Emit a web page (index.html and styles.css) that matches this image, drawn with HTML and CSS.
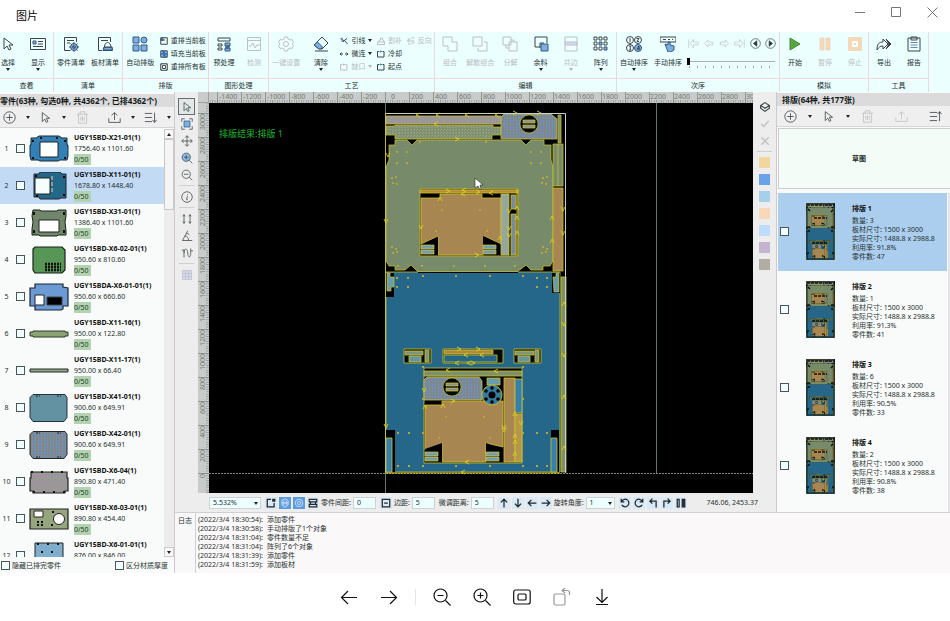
FILE: index.html
```html
<!DOCTYPE html>
<html lang="zh-CN">
<head>
<meta charset="utf-8">
<title>图片</title>
<link rel="stylesheet" href="styles.css">
</head>
<body>
<svg class="defs" aria-hidden="true">
  <defs>
    <symbol id="cursor" viewBox="0 0 16 16"><path d="M4 2v11l3-3 2 4 2-1-2-4h4z"/></symbol>
    <symbol id="card" viewBox="0 0 16 16"><path d="M.5 2.500h15v11H.5z"/><path class="b" d="M3 5h3v3H3z"/><path d="M8 5.500h5M8 8h5M3 10.500h10"/></symbol>
    <symbol id="listgear" viewBox="0 0 16 16"><path d="M7 14.500H1.500v-13h12V6M4 4.500h7M4 7h3"/><circle class="b" cx="11" cy="11" r="3.500"/><circle cx="11" cy="11" r="1.300"/><path d="M11 6v1.500M11 14.500V16M6 11h1.500M14.500 11H16M7.500 7.500l1 1M13.500 13.500l1 1M14.500 7.500l-1 1M8.500 13.500l-1 1"/></symbol>
    <symbol id="listplate" viewBox="0 0 16 16"><path d="M5 14.500H1.500v-13h12V6M4 4.500h7M6 14.500h9.500L15 11H7zM7.500 11c0-6 6-6 6.500 0"/><path class="b" d="M7 11.500h8v2.500H6.500z"/></symbol>
    <symbol id="tiles" viewBox="0 0 16 16"><g class="b"><path d="M1 1h6v6H1zM1 9h6v6H1zM9 9h6v6H9z"/><circle cx="12" cy="4" r="3"/></g></symbol>
    <symbol id="renest" viewBox="0 0 16 16"><path d="M1.500 1.500h13v13h-13zM5 1v5h5M5 6H1"/><path class="b" d="M3 3h3v4H3z"/></symbol>
    <symbol id="fill" viewBox="0 0 16 16"><path class="b" d="M1.500 1.500h13v13h-13zM1 8h14M8 1v14M5 2l4 5M8 10l5 4"/></symbol>
    <symbol id="nestall" viewBox="0 0 16 16"><path d="M1.500 1.500h13v13h-13z"/><circle cx="8" cy="8" r="3.500"/><path d="M3 3l2 2M13 13l-2-2M13 3l-2 2M3 13l2-2"/></symbol>
    <symbol id="pre" viewBox="0 0 16 16"><path d="M2 2h12v3H2zM2 8h4v2H2zM2 12h4v2H2z"/><path class="b" d="M9 7h5v3H9zM10 10h3v2h-3zM9 12h5v3H9z"/></symbol>
    <symbol id="detect" viewBox="0 0 16 16"><path d="M1.500 1.500h13v13h-13zM1 4.500h14M3 10h2l2-3 2 5 2-3h3"/></symbol>
    <symbol id="gear" viewBox="0 0 16 16"><circle cx="8" cy="8" r="2.500"/><path d="M6.500 1h3l.5 2 2 1 2-.5 1.500 3L14 8l1.500 1.500-1.500 3-2-.5-2 1-.5 2h-3L6 13l-2-1-2 .5-1.500-3L2 8 .5 6.500 2 3.500 4 4l2-1z"/></symbol>
    <symbol id="eraser" viewBox="0 0 16 16"><path d="M9 1l6 6-6 6H6L1 9zM2 15h13"/><path class="b" d="M4.500 6L9.500 11 8 13H6L1 9z"/></symbol>
    <symbol id="lead" viewBox="0 0 16 16"><path d="M1 3l5 3 1 4M14 3L6 9M9 7l6 7"/><path class="l" d="M4 1v9"/></symbol>
    <symbol id="micro" viewBox="0 0 16 16"><path d="M0 8h6M10 8h6M3 5L0 8l3 3M13 5l3 3-3 3"/></symbol>
    <symbol id="box" viewBox="0 0 16 16"><path d="M4 3H1v11h13V3h-3"/><path class="l" d="M5 3h5M7 1v4"/></symbol>
    <symbol id="stamp" viewBox="0 0 16 16"><path d="M1 10h14v5H1zM4 10V7l3-1V2h4v4l3 1v3"/></symbol>
    <symbol id="rev" viewBox="0 0 16 16"><path d="M1 4h6M9 2h6M1 8h14M4 5L1 8l3 3M9 12h6M2 14h5"/></symbol>
    <symbol id="union" viewBox="0 0 16 16"><path d="M1 1h9v5h5v9H6v-5H1z"/></symbol>
    <symbol id="ungroup" viewBox="0 0 16 16"><path d="M1 1h9v9H1zM12 6h3v9H6v-3"/></symbol>
    <symbol id="split" viewBox="0 0 16 16"><path d="M1 1h8v8H1zM7 6h8v9H7zM9 4h3v2M4 9v3h3"/></symbol>
    <symbol id="remnant" viewBox="0 0 16 16"><path d="M7 11H2V1h12v6"/><path d="M7 12V7h4"/><path class="b" d="M8 8h7v7H8z"/></symbol>
    <symbol id="edge" viewBox="0 0 16 16"><path d="M2 1h12v14H2z"/><path class="b" d="M2 6h12v3H2z"/></symbol>
    <symbol id="array" viewBox="0 0 16 16"><path d="M1 1h3v3H1zM6 1h3v3H6zM11 1h3v3h-3zM1 6h3v3H1zM11 6h3v3h-3zM1 11h3v3H1zM6 11h3v3H6z"/><path class="b" d="M6 6h3v3H6zM11 11h3v3h-3z"/></symbol>
    <symbol id="order" viewBox="0 0 16 16"><circle cx="4" cy="4" r="3.500"/><circle cx="12" cy="4" r="3.500"/><circle cx="4" cy="12" r="3.500"/><circle class="b" cx="12" cy="12" r="3.500"/><path d="M4 2v4M10.500 2.500h2.500l-2 3h2M3 10h2l-1 2 1 2H3M13 10v4M13 10l-2 3h3"/></symbol>
    <symbol id="manual" viewBox="0 0 16 16"><path d="M0 1h16v5H0zM3 3.500h3M8 3.500h2M12 3.500h1"/><path class="b" d="M5 8l3 1V6h2v3l4 1v4l-3 2H8z"/></symbol>
    <symbol id="first" viewBox="0 0 16 16"><path d="M1 2v12M3 8l5-6v4h7v4H8v4z"/></symbol>
    <symbol id="prev" viewBox="0 0 16 16"><path d="M2 8l5-5v3h7v4H7v3z"/></symbol>
    <symbol id="next" viewBox="0 0 16 16"><path d="M14 8L9 3v3H2v4h7v3z"/></symbol>
    <symbol id="last" viewBox="0 0 16 16"><path d="M15 2v12M13 8L8 2v4H1v4h7v4z"/></symbol>
    <symbol id="cprev" viewBox="0 0 16 16"><circle cx="8" cy="8" r="7"/><path class="k" d="M10 4v8L5 8z"/></symbol>
    <symbol id="cnext" viewBox="0 0 16 16"><circle cx="8" cy="8" r="7"/><path class="k" d="M6 4v8l5-4z"/></symbol>
    <symbol id="play" viewBox="0 0 16 16"><path d="M3 2l10 6-10 6z" fill="#58a63c" stroke="#3f8b35"/></symbol>
    <symbol id="pause" viewBox="0 0 16 16"><path d="M3 2h4v12H3zM9 2h4v12H9z" fill="#f3d9b8" stroke="#eed5bb"/></symbol>
    <symbol id="stop" viewBox="0 0 16 16"><path d="M3 3h10v10H3z" fill="#fff" stroke="#f3d9b8" stroke-width="4"/><path d="M7 7h2v2H7z" fill="#f3d9b8" stroke="none"/></symbol>
    <symbol id="export" viewBox="0 0 16 16"><path d="M1 14c0-6 2-8 6-8V3l5 5-5 5v-3c-3 0-4 1-6 4z"/><path class="k" d="M10 3l5 5-5 5 3-5z"/></symbol>
    <symbol id="report" viewBox="0 0 16 16"><path d="M2 2h12v13H2zM5 1h6v3H5z"/><path d="M4.500 6.500h7M4.500 9h7M4.500 11.500h7" stroke="#68a"/></symbol>
    <symbol id="plus" viewBox="0 0 16 16"><circle cx="8" cy="8" r="7"/><path d="M4 8h8M8 4v8"/></symbol>
    <symbol id="trash" viewBox="0 0 16 16"><path d="M1 4h14M3 4v11h10V4M5 4V1h6v3M6 7v5M8 7v5M10 7v5"/></symbol>
    <symbol id="share" viewBox="0 0 16 16"><path d="M1 9v5h14V9M8 11V2M4.500 5.500L8 2l3.500 3.500"/></symbol>
    <symbol id="sortd" viewBox="0 0 16 16"><path d="M1 3h9M1 8h9M1 13h9M13 2v12M10.500 11l2.500 3 2.500-3"/></symbol>
    <symbol id="sortu" viewBox="0 0 16 16"><path d="M1 3h9M1 8h9M1 13h9M13 14V2M10.500 5L13 2l2.500 3"/></symbol>
    <symbol id="fit" viewBox="0 0 16 16"><path d="M1 5V1h4M11 1h4v4M15 11v4h-4M5 15H1v-4"/><path class="b" d="M4 4h8v8H4z"/></symbol>
    <symbol id="move" viewBox="0 0 16 16"><path d="M8 1v14M1 8h14M5.500 3.500L8 1l2.500 2.500M5.500 12.500L8 15l2.500-2.500M3.500 5.500L1 8l2.500 2.500M12.500 5.500L15 8l-2.500 2.500"/></symbol>
    <symbol id="zin" viewBox="0 0 16 16"><circle cx="7" cy="7" r="5.500"/><path d="M11 11l4 4M4 7h6M7 4v6"/></symbol>
    <symbol id="zout" viewBox="0 0 16 16"><circle cx="7" cy="7" r="5.500"/><path d="M11 11l4 4M4 7h6"/></symbol>
    <symbol id="info" viewBox="0 0 16 16"><circle cx="8" cy="8" r="7"/><path d="M9 4l-.3 1M8.500 6.500l-1 5h1.500"/></symbol>
    <symbol id="measure" viewBox="0 0 16 16"><path d="M4 3v10M12 3v10M2.500 4.500L4 2l1.500 2.500M2.500 11.500L4 14l1.500-2.500M10.500 4.500L12 2l1.500 2.500M10.500 11.500L12 14l1.500-2.500"/></symbol>
    <symbol id="angle" viewBox="0 0 16 16"><path d="M9 1L2 14h13M5 8c4 0 5 3 5 6M7 4l4 2"/></symbol>
    <symbol id="curve" viewBox="0 0 16 16"><path d="M1 4h3v10M4 8c0-8 5-6 5 0s4 8 4-1V2M13 5h3"/></symbol>
    <symbol id="grid" viewBox="0 0 16 16"><path class="b" d="M2 2h12v12H2zM2 6h12M2 10h12M6 2v12M10 2v12"/></symbol>
    <symbol id="layers" viewBox="0 0 16 16"><path d="M8 1l7 4.500-7 4.500-7-4.500zM1 5.500V10l7 5 7-5V5.500" stroke-width="1.800"/></symbol>
    <symbol id="check" viewBox="0 0 16 16"><path d="M2 8l4 4 8-9" stroke-width="2"/></symbol>
    <symbol id="cross" viewBox="0 0 16 16"><path d="M2 2l12 12M14 2L2 14" stroke-width="2"/></symbol>
    <symbol id="corner" viewBox="0 0 16 16"><path class="k" d="M11 2h3v3h-3z"/><path d="M8 2H2v12h11V8"/></symbol>
    <symbol id="snap" viewBox="0 0 16 16"><path d="M3 4l5-3 5 3v7l-5 4-5-4zM3 8h10M6 4v8M10 4v8"/></symbol>
    <symbol id="ring" viewBox="0 0 16 16"><circle cx="8" cy="8" r="6"/><circle cx="8" cy="8" r="2.500"/></symbol>
    <symbol id="rows" viewBox="0 0 16 16"><path d="M2 2h12v4H2zM2 10h12v4H2zM4 6v4M12 6v4"/></symbol>
    <symbol id="margin" viewBox="0 0 16 16"><path d="M2 2h12v12H2zM5 8h6"/></symbol>
    <symbol id="up" viewBox="0 0 16 16"><path d="M8 15V2M3 7l5-5 5 5"/></symbol>
    <symbol id="down" viewBox="0 0 16 16"><path d="M8 1v13M3 9l5 5 5-5"/></symbol>
    <symbol id="left" viewBox="0 0 16 16"><path d="M15 8H2M7 3L2 8l5 5"/></symbol>
    <symbol id="right" viewBox="0 0 16 16"><path d="M1 8h13M9 3l5 5-5 5"/></symbol>
    <symbol id="ccw" viewBox="0 0 16 16"><path d="M3 5a6 6 0 1 1 0 6M2 1v5h5"/></symbol>
    <symbol id="cw" viewBox="0 0 16 16"><path d="M13 5a6 6 0 1 0 0 6M14 1v5H9"/></symbol>
    <symbol id="tl" viewBox="0 0 16 16"><path d="M13 15V5H3M7 1L3 5l4 4"/></symbol>
    <symbol id="tr" viewBox="0 0 16 16"><path d="M3 15V5h10M9 1l4 4-4 4"/></symbol>
    <symbol id="mirror" viewBox="0 0 16 16"><path d="M2 2h3v12H2z"/><path class="k" d="M10 2h4v12h-4z"/></symbol>

    <pattern id="mauve" width="3" height="3" patternUnits="userSpaceOnUse"><path d="M0 0h3v3H0z" fill="#969a93"/><path d="M0 0h1v1H0z" fill="#c07fc9"/></pattern>
    <pattern id="hatch" width="3" height="3" patternUnits="userSpaceOnUse"><path d="M0 0h3v3H0z" fill="#7f9073"/><path d="M0 0h1v1H0zM2 1h1v1H2z" fill="#9ba87d"/></pattern>
    <pattern id="steel" width="3" height="3" patternUnits="userSpaceOnUse"><path d="M0 0h3v3H0z" fill="#81888b"/><path d="M0 0h1v2H0z" fill="#6594d5"/></pattern>
    <pattern id="sea" width="4" height="4" patternUnits="userSpaceOnUse"><path d="M0 0h4v4H0z" fill="#236789"/><path d="M1 0h1v1H1zM3 2h1v1H3z" fill="#355f8b"/></pattern>

    <g id="slug"><path d="M0 0h13v4H0zM0 5h13v4H0z" fill="#7fa0a3" stroke="#d3c92c" stroke-width=".7"/><path d="M2 2h9M2 7h9" stroke="#6b8fd0" stroke-dasharray="2 1"/></g>
    <g id="hub"><circle cx="0" cy="0" r="9" fill="#050805" stroke="#d3c92c" stroke-width=".6"/><path d="M-6-4H6v3H-6zM-6 1H6v3H-6z" fill="#879493" stroke="#d3c92c" stroke-width=".7"/></g>
    <symbol id="nest" viewBox="385 113 182 360">
      <path d="M385 113h181v360H385z" fill="#000" stroke="none"/>
      <g stroke="#c5bd2b" stroke-width=".8">
        <path d="M386 116h115v8H386z" fill="url(#mauve)"/>
        <path d="M386 126h9v-1h98v2h8v8h-9v4H395v-4h-9z" fill="url(#hatch)"/>
        <path d="M504 114h47l6 5v20h-56v-22z" fill="url(#steel)"/>
        <path d="M558 115h3v28h-3z" fill="#7e906f"/>
        <path d="M395 140h12l5 5 5-5h104l5 5 5-5h13v5h7v15l2 7v94l-3 5h-7v4h-12l-5-5-9 7H418l-7-7-6 5H395v-4h-6l-3-5v-94l3-7v-15h6z" fill="#778b6b"/>
        <path d="M553 144h10v42h-10zM558 144v42" fill="#778b6b"/>
        <path d="M553 188h10v83h-10z" fill="#a88652"/>
        <path d="M386 272h174v200H386z" fill="url(#sea)"/>
      </g>
      <path d="M385 273h9v24h-9zM552 273h8v20h-8zM386 430h9v42h-9zM551 430h8v42h-8zM418 272h100v1H418z" fill="#000" stroke="none"/>
      <g fill="#6a9caa" stroke="#cfc72a" stroke-width=".7"><path d="M387 273h3v4h4v10h-3v4h-4zM553 277h3v-4h3v19h-5z"/></g>
      <path d="M386 438h6v34h-6zM551 438h6v34h-6z" fill="#3580ae" stroke="#cfc72a" stroke-width=".8"/>
      <path d="M561 277h5v195h-5z" fill="#7c906a" stroke="#cfc72a" stroke-width=".8"/>
      <path d="M420 189h98v67h-98z" fill="#000" stroke="#b0a42d"/>
      <g stroke="#cfc32a" stroke-width=".8">
        <path d="M420 190h98v3h-98z" fill="#b58b38"/>
        <path d="M421 198h19v-4h42v4h19v46l-17-8v19h-46v-19l-17 8z" fill="#a88652"/>
        <path d="M501 194h8v61h-8z" fill="#93a79d"/>
        <path d="M511 195h5v14h-5zM511 214h5v41h-5z" fill="url(#steel)"/>
        <path d="M404 349h27v14h-27zM443 349h60v14h-60zM514 349h27v14h-27z" fill="#030a08"/>
        <path d="M405 351h18v4h-18zM425 350h4v12h-4zM515 351h19v4h-19zM535 350h4v12h-4z" fill="#7f947c"/>
        <path d="M409 356h12v6h-12zM518 356h12v6h-12z" fill="#6595a0"/>
        <path d="M444 350h49v4h-49z" fill="#ae8b42"/>
        <path d="M444 355h53v7h-53z" fill="#236789"/>
        <path d="M424 368h98v95h-98z" fill="#000"/>
        <path d="M424 371h98v5h-98z" fill="#7c906a"/>
        <path d="M427 377h52l3 4v19h-58v-20z" fill="url(#steel)"/>
        <path d="M425 405h17v-4h61v46l-17-4v19h-44v-19l-17 7z" fill="#a88652"/>
        <path d="M504 378h11v84h-11z" fill="#a88652"/>
        <path d="M515 379h7v34h-7z" fill="#3580ae"/>
        <path d="M515 414h7v48h-7z" fill="#b6964b"/>
        <path d="M487 378h13v7h-13z" fill="#6a9caa"/>
        <circle cx="492" cy="395" r="10" fill="#347da0"/>
      </g>
      <path d="M421 246l17-9v18h-17zM483 236l17 8v11h-17zM425 449l17-6v19h-17zM486 443l17 8v11h-17z" fill="#000" stroke="none"/>
      <use href="#slug" x="421" y="245"/><use href="#slug" x="483" y="245"/><use href="#slug" x="425" y="452"/><use href="#slug" x="486" y="452"/>
      <use href="#hub" x="529" y="124"/><use href="#hub" x="452" y="387"/>
      <g fill="#000" stroke="none"><circle cx="492" cy="395" r="3.500"/><circle cx="492" cy="388" r="1.800"/><circle cx="492" cy="402" r="1.800"/><circle cx="498" cy="391" r="1.800"/><circle cx="498" cy="399" r="1.800"/><circle cx="486" cy="391" r="1.800"/><circle cx="486" cy="399" r="1.800"/></g>
    </symbol>
    <symbol id="thumb" viewBox="0 0 29 57">
      <path d="M0 0h29v57H0z" fill="#10231f"/>
      <use href="#nest" width="29" height="57"/>
      <path d="M1 2h17M19 2h9M2 6l2 2M27 7l-2 2M1 24h3M25 24h3M2 28h2M25 28h2M1 50h2M26 50h2M8 15h13M6 40h15" stroke="#111" stroke-width="1.500" stroke-dasharray="3 1"/>
      <path d="M1 1v55h27V1z" fill="none" stroke="#18241e"/>
    </symbol>
    <pattern id="minorh" x="385" width="2.400" height="11" patternUnits="userSpaceOnUse"><path d="M0 8h.8v3H0z" fill="#8f9a95"/></pattern>
    <pattern id="majorh" x="385" width="24" height="11" patternUnits="userSpaceOnUse"><path d="M0 0h.8v11H0z" fill="#7d8a82"/></pattern>
    <pattern id="minorv" y="473" width="11" height="2.400" patternUnits="userSpaceOnUse"><path d="M8 0h3v.8H8z" fill="#8f9a95"/></pattern>
    <pattern id="majorv" y="473" width="11" height="24" patternUnits="userSpaceOnUse"><path d="M0 0h11v.8H0z" fill="#7d8a82"/></pattern>
  </defs>
</svg>

<header class="titlebar">
  <h1>图片</h1>
  <div class="winbtns">
    <button aria-label="最小化"><svg class="i11"><path d="M0 5.500h10"/></svg></button>
    <button aria-label="最大化"><svg class="i11"><path d="M.5.500h9v9h-9z"/></svg></button>
    <button aria-label="关闭"><svg class="i11"><path d="M.5.500l10 10M10.500.500l-10 10"/></svg></button>
  </div>
</header>

<nav class="ribbon">
  <section><div class="body"><button class="big"><svg><use href="#cursor"/></svg>选择<i class="caret"></i></button><button class="big"><svg><use href="#card"/></svg>显示<i class="caret"></i></button></div><h2>查看</h2></section>
  <section><div class="body"><button class="big"><svg><use href="#listgear"/></svg>零件清单</button><button class="big"><svg><use href="#listplate"/></svg>板材清单</button></div><h2>清单</h2></section>
  <section><div class="body"><button class="big"><svg><use href="#tiles"/></svg>自动排版</button><div class="stack"><button><svg><use href="#renest"/></svg>重排当前板</button><button><svg><use href="#fill"/></svg>填充当前板</button><button><svg><use href="#nestall"/></svg>重排所有板</button></div></div><h2>排版</h2></section>
  <section><div class="body"><button class="big"><svg><use href="#pre"/></svg>预处理</button><button class="big off"><svg><use href="#detect"/></svg>检测</button></div><h2>图形处理</h2></section>
  <section><div class="body"><button class="big off"><svg><use href="#gear"/></svg>一键设置</button><button class="big"><svg><use href="#eraser"/></svg>清除<i class="caret"></i></button>
    <div class="stack"><button><svg><use href="#lead"/></svg>引线<i class="caret"></i></button><button><svg><use href="#micro"/></svg>微连<i class="caret"></i></button><button class="off"><svg><use href="#box"/></svg>缺口<i class="caret"></i></button></div>
    <div class="stack"><button class="off"><svg><use href="#stamp"/></svg>割补</button><button><svg><use href="#box"/></svg>冷却</button><button><svg><use href="#box"/></svg>起点</button></div>
    <div class="stack"><button class="off"><svg><use href="#rev"/></svg>反向</button></div></div><h2>工艺</h2></section>
  <section><div class="body"><button class="big off"><svg><use href="#union"/></svg>组合</button><button class="big off"><svg><use href="#ungroup"/></svg>解散组合</button><button class="big off"><svg><use href="#split"/></svg>分解</button><button class="big"><svg><use href="#remnant"/></svg>余料<i class="caret"></i></button><button class="big off"><svg><use href="#edge"/></svg>共边<i class="caret"></i></button><button class="big"><svg><use href="#array"/></svg>阵列<i class="caret"></i></button></div><h2>编辑</h2></section>
  <section><div class="body"><button class="big"><svg><use href="#order"/></svg>自动排序<i class="caret"></i></button><button class="big"><svg><use href="#manual"/></svg>手动排序</button>
    <div class="playback"><div class="steps"><button class="off" aria-label="第一个"><svg><use href="#first"/></svg></button><button class="off" aria-label="上一个"><svg><use href="#prev"/></svg></button><button class="off" aria-label="下一个"><svg><use href="#next"/></svg></button><button class="off" aria-label="最后"><svg><use href="#last"/></svg></button><button aria-label="后退"><svg><use href="#cprev"/></svg></button><button aria-label="前进"><svg><use href="#cnext"/></svg></button></div><input type="range" aria-label="次序" min="0" max="11" value="0"><div class="ticks"></div></div></div><h2>次序</h2></section>
  <section><div class="body"><button class="big"><svg><use href="#play"/></svg>开始</button><button class="big off"><svg><use href="#pause"/></svg>暂停</button><button class="big off"><svg><use href="#stop"/></svg>停止</button></div><h2>模拟</h2></section>
  <section><div class="body"><button class="big"><svg><use href="#export"/></svg>导出</button><button class="big"><svg><use href="#report"/></svg>报告</button></div><h2>工具</h2></section>
</nav>

<main>
  <aside class="parts">
    <h2 class="head">零件(63种, 勾选0种, 共4362个, 已排4362个)</h2>
    <div class="bar"><button aria-label="添加"><svg><use href="#plus"/></svg></button><i class="caret"></i><button aria-label="选择"><svg><use href="#cursor"/></svg></button><i class="caret"></i><button class="off" aria-label="删除"><svg><use href="#trash"/></svg></button><span></span><button aria-label="导出"><svg><use href="#share"/></svg></button><i class="caret"></i><button aria-label="排序"><svg><use href="#sortd"/></svg></button><i class="caret"></i></div>
    <div class="listwrap">
      <ol class="partlist">
        <li><label for="p1">1</label><input type="checkbox" id="p1"><svg viewBox="0 0 40 28"><path d="M2 3h5l3-2h20l3 2h5v7h1v11l-1 4h-7l-2 1H11l-2-1H2l-1-4V10h1z" fill="#3181b6" stroke="#1c2a33"/><path d="M11 7h18v15H11z" fill="#fff" stroke="#222"/><path d="M4 5v2M4 22v2M36 5v2M36 22v2M11 3h2M27 3h2" stroke="#111" stroke-width="2"/></svg><div><b>UGY15BD-X21-01(1)</b><span>1756.40 x 1101.60</span><em>0/50</em></div></li>
        <li class="picked"><label for="p2">2</label><input type="checkbox" id="p2"><svg viewBox="0 0 40 28"><path d="M5 2h5l1-2h20l2 2h4v24h-5l-2 1H11l-1-2H5z" fill="#236789" stroke="#1c2a33"/><path d="M6 6h15v16H6z" fill="#f4fffd" stroke="#222"/><path d="M23 4v18" stroke="#8d9d9e" stroke-width="2" stroke-dasharray="4 2"/><path d="M7 3v2M35 4v2M35 22v2M8 23v2" stroke="#000" stroke-width="2"/></svg><div><b>UGY15BD-X11-01(1)</b><span>1678.80 x 1448.40</span><em>0/50</em></div></li>
        <li><label for="p3">3</label><input type="checkbox" id="p3"><svg viewBox="0 0 40 28"><path d="M4 1h7l1 1h16l1-1h8v6l-1 6 1 9v4h-8l-1 1H11l-1-1H3v-6l1-7-1-6z" fill="#71866a" stroke="#1b221a"/><path d="M10 11h20v12H10z" fill="#fff" stroke="#222"/><path d="M5 3v3M35 3v3M5 21v3M35 21v3" stroke="#111" stroke-width="2"/></svg><div><b>UGY15BD-X31-01(1)</b><span>1386.40 x 1101.60</span><em>0/50</em></div></li>
        <li><label for="p4">4</label><input type="checkbox" id="p4"><svg viewBox="0 0 40 28"><path d="M6 1h27l3 3v20l-3 3H6l-2-3V3z" fill="#579657" stroke="#1b221a" stroke-width="1.200"/><path d="M16 21h16M16 18h16M16 24h16" stroke="#111" stroke-width="2.500" stroke-dasharray="2 1"/></svg><div><b>UGY15BD-X6-02-01(1)</b><span>950.60 x 810.60</span><em>0/50</em></div></li>
        <li><label for="p5">5</label><input type="checkbox" id="p5"><svg viewBox="0 0 40 28"><path d="M6 1h28v3l5 1v18h-5v3l-2 1H6v-4H1V5h5z" fill="#6b9ad5" stroke="#1b2633" stroke-width="1.200"/><path d="M6 12h9v10H6z" fill="#fff" stroke="#222"/><path d="M18 14h15v8H18z" fill="#000"/></svg><div><b>UGY15BDA-X6-01-01(1)</b><span>950.60 x 660.60</span><em>0/50</em></div></li>
        <li><label for="p6">6</label><input type="checkbox" id="p6"><svg viewBox="0 0 40 28"><path d="M1 12h3v-1h32v1h3v4h-3v1H4v-1H1z" fill="#8ba277" stroke="#303a2c"/></svg><div><b>UGY15BD-X11-16(1)</b><span>950.00 x 122.80</span><em>0/50</em></div></li>
        <li><label for="p7">7</label><input type="checkbox" id="p7"><svg viewBox="0 0 40 28"><path d="M1 12h38v3H1z" fill="#96a491" stroke="#222b22"/></svg><div><b>UGY15BD-X11-17(1)</b><span>950.00 x 66.40</span><em>0/50</em></div></li>
        <li><label for="p8">8</label><input type="checkbox" id="p8"><svg viewBox="0 0 40 28"><path d="M4 .5h32l2 3v20l-3 4H4l-3-4v-20z" fill="#6392a3" stroke="#24313a"/><path d="M7 2h4M28 2h4" stroke="#222" stroke-dasharray="2 1"/></svg><div><b>UGY15BD-X41-01(1)</b><span>900.60 x 649.91</span><em>0/50</em></div></li>
        <li><label for="p9">9</label><input type="checkbox" id="p9"><svg viewBox="0 0 40 28"><path d="M4 .5h32l2 3v20l-3 4H4l-3-4v-20z" fill="url(#steel)" stroke="#24272a"/><path d="M7 2h4M28 2h4M7 26h4M28 26h4" stroke="#222" stroke-dasharray="2 1"/></svg><div><b>UGY15BD-X42-01(1)</b><span>900.60 x 649.91</span><em>0/50</em></div></li>
        <li><label for="p10">10</label><input type="checkbox" id="p10"><svg viewBox="0 0 40 28"><path d="M2 4h36v6h1v13h-3v2H4v-2H1V10h1z" fill="url(#mauve)" stroke="#222" stroke-width="1.200"/><path d="M2 4h36M4 24h32" stroke="#111" stroke-width="2" stroke-dasharray="2 8"/></svg><div><b>UGY15BD-X6-04(1)</b><span>890.80 x 471.40</span><em>0/50</em></div></li>
        <li><label for="p11">11</label><input type="checkbox" id="p11"><svg viewBox="0 0 40 28"><path d="M1 4h38v20H1z" fill="#96a57d" stroke="#222" stroke-width="1.200"/><path d="M5 6h9v6H5z" fill="#fff" stroke="#222"/><circle cx="30" cy="14" r="5.500" fill="#fff" stroke="#222"/><path d="M8 17h6M8 20h6M23 7h2M22 20h2" stroke="#111" stroke-width="2" stroke-dasharray="2 2"/></svg><div><b>UGY15BD-X6-03-01(1)</b><span>890.80 x 454.40</span><em>0/50</em></div></li>
        <li><label for="p12">12</label><input type="checkbox" id="p12"><svg viewBox="0 0 40 28"><path d="M6 1h28v26H6z" fill="#7faecd" stroke="#222"/><path d="M8 2h26M12 10h18" stroke="#111" stroke-width="2" stroke-dasharray="2 8"/></svg><div><b>UGY15BD-X6-01-01(1)</b><span>876.00 x 846.00</span><em>0/50</em></div></li>
      </ol>
      <div class="scroll"><button aria-label="向上"><i class="caret flip"></i></button><div class="grip"></div><button aria-label="向下"><i class="caret"></i></button></div>
    </div>
    <div class="filters"><label><input type="checkbox">隐藏已排完零件</label><label><input type="checkbox">区分材质厚度</label></div>
  </aside>

  <div class="work">
    <div class="upper">
      <div class="center">
        <div class="stage">
          <div class="tools">
            <button class="on" aria-label="选择"><svg><use href="#cursor"/></svg></button><button aria-label="适合"><svg><use href="#fit"/></svg></button><button aria-label="平移"><svg><use href="#move"/></svg></button><button class="zi" aria-label="放大"><svg><use href="#zin"/></svg></button><button aria-label="缩小"><svg><use href="#zout"/></svg></button><hr>
            <button aria-label="信息"><svg><use href="#info"/></svg></button><hr>
            <button aria-label="测量"><svg><use href="#measure"/></svg></button><button aria-label="角度"><svg><use href="#angle"/></svg></button><button aria-label="曲线"><svg><use href="#curve"/></svg></button><hr>
            <button class="off" aria-label="网格"><svg><use href="#grid"/></svg></button>
          </div>
          <div class="canvas">
            <div class="cross"></div>
            <svg class="rh" viewBox="209 0 544 11" preserveAspectRatio="xMinYMin slice">
              <g stroke="none"><path d="M209 0h1200v11H209z" fill="#c9cbca"/><path d="M209 0h1200v11H209z" fill="url(#minorh)"/><path d="M209 0h1200v11H209z" fill="url(#majorh)"/></g>
              <g class="num"><text x="219" y="7">-1400</text><text x="243" y="7">-1200</text><text x="267" y="7">-1000</text><text x="291" y="7">-800</text><text x="315" y="7">-600</text><text x="339" y="7">-400</text><text x="363" y="7">-200</text><text x="391" y="7">0</text><text x="411" y="7">200</text><text x="435" y="7">400</text><text x="459" y="7">600</text><text x="483" y="7">800</text><text x="506" y="7">1000</text><text x="530" y="7">1200</text><text x="554" y="7">1400</text><text x="578" y="7">1600</text><text x="602" y="7">1800</text><text x="626" y="7">2000</text><text x="650" y="7">2200</text><text x="674" y="7">2400</text><text x="698" y="7">2600</text><text x="722" y="7">2800</text><text x="746" y="7">3000</text></g>
            </svg>
            <svg class="rv" viewBox="0 103 11 390" preserveAspectRatio="xMinYMin slice">
              <g stroke="none"><path d="M0 103h11v900H0z" fill="#c9cbca"/><path d="M0 103h11v900H0z" fill="url(#minorv)"/><path d="M0 103h11v900H0z" fill="url(#majorv)"/></g>
              <g class="num end"><text transform="translate(7 114) rotate(-90)">3000</text><text transform="translate(7 138) rotate(-90)">2800</text><text transform="translate(7 162) rotate(-90)">2600</text><text transform="translate(7 186) rotate(-90)">2400</text><text transform="translate(7 210) rotate(-90)">2200</text><text transform="translate(7 234) rotate(-90)">2000</text><text transform="translate(7 258) rotate(-90)">1800</text><text transform="translate(7 282) rotate(-90)">1600</text><text transform="translate(7 306) rotate(-90)">1400</text><text transform="translate(7 330) rotate(-90)">1200</text><text transform="translate(7 354) rotate(-90)">1000</text><text transform="translate(7 378) rotate(-90)">800</text><text transform="translate(7 402) rotate(-90)">600</text><text transform="translate(7 426) rotate(-90)">400</text><text transform="translate(7 450) rotate(-90)">200</text><text transform="translate(7 474) rotate(-90)">0</text></g>
            </svg>
            <svg class="plot" viewBox="209 103 544 390" preserveAspectRatio="xMinYMin slice">
              <path d="M385.500 103v390M656.500 103v370" stroke="#64776c"/>
              <path d="M209 473.500h544" stroke="#7d8a86" stroke-dasharray="2 1"/>
              <text class="result" x="219" y="137">排版结果:排版 1</text>
              <use href="#nest" x="385" y="113" width="182" height="360"/>
              <path d="M385 113.500h180.500V473" fill="none" stroke="#c9cfc4"/>
              <g fill="none" stroke="#dbd01f" stroke-width=".9">
                <path d="M465 115l4-2m-4 2l4 2M495 115l4-2m-4 2l4 2M436 115l4-2m-4 2l4 2M416 115l4-2m-4 2l4 2M434 124l4-2m-4 2l4 2M517 113l-4-2m4 2l-4 2M541 113l-4-2m4 2l-4 2M459 139l-4-2m4 2l-4 2M450 191l-4-2m4 2l-4 2M480 192l-4-2m4 2l-4 2M462 190l4-2m-4 2l4 2M489 193l4-2m-4 2l4 2M461 194l4-2m-4 2l4 2M479 255l-4-2m4 2l-4 2M461 349l-4-2m4 2l-4 2M480 349l-4-2m4 2l-4 2M464 355l4-2m-4 2l4 2M480 355l4-2m-4 2l4 2M446 370l4-2m-4 2l4 2M494 371l4-2m-4 2l4 2M455 363l4-2m-4 2l4 2M465 462l4-2m-4 2l4 2M461 472l4-2m-4 2l4 2M455 401l-4-2m4 2l-4 2"/>
                <path d="M386 223l-2-4m2 4l2-4M388 157l-2-4m2 4l2-4M421 229l-2-4m2 4l2-4M509 213l-2-4m2 4l2-4M509 230l-2-4m2 4l2-4M509 237l-2-4m2 4l2-4M563 211l-2-4m2 4l2-4M563 235l-2-4m2 4l2-4M424 392l-2-4m2 4l2-4M504 429l-2-4m2 4l2-4M504 432l-2-4m2 4l2-4M521 425l-2-4m2 4l2-4M386 428l-2-4m2 4l2-4M564 326l-2-4m2 4l2-4M564 357l-2-4m2 4l2-4"/>
                <path d="M440 197l-2 4m2-4l2 4M552 216l-2 4m2-4l2 4M552 239l-2 4m2-4l2 4M517 206l-2 4m2-4l2 4M517 216l-2 4m2-4l2 4M517 231l-2 4m2-4l2 4M500 236l-2 4m2-4l2 4M564 302l-2 4m2-4l2 4M564 395l-2 4m2-4l2 4M564 446l-2 4m2-4l2 4M515 412l-2 4m2-4l2 4M515 434l-2 4m2-4l2 4M515 440l-2 4m2-4l2 4M515 452l-2 4m2-4l2 4M425 405l-2 4m2-4l2 4M443 404l-2 4m2-4l2 4"/>
                <path d="M385.500 113v360H560M517 189v67M467 363l4-2 4 2-4 2z"/>
              </g>
              <path d="M396 152h2m8 0h2M396 163h2m8 0h2M391 178h2m2-1h2M392 183h2m2 1h2M530 152h2m8 0h2M530 163h2m8 0h2M542 178h2m2-1h2M541 183h2m2 1h2M391 247h2m2 2h2M392 253h2m2-1h2M542 247h2m2 2h2M541 253h2m2-1h2M397 266h2M421 266h2M453 266h2M484 266h2M514 266h2M396 278h2m9 0h2M396 287h2m9 0h2M422 276h2M455 276h2M489 276h2M522 276h2M536 278h2m8 0h2M536 287h2m8 0h2M441 210h2m36 0h2M435 231h2m49 0h2M397 433h2m9 0h2M536 433h2m8 0h2M422 433h2M522 433h2M397 466h2m9 0h2M422 466h2M455 466h2M489 466h2M522 466h2M536 466h2m8 0h2M445 417h2m36 0h2M438 438h2m49 0h2M422 399h2M522 399h2M422 367h2M522 367h2M419 142h2m64 0h2" fill="none" stroke="#b5a53c" stroke-width="2"/>
              <path d="M475 178v10l3-2 2 4 1-1-1-4h3z" fill="#fff" stroke="#222" stroke-width=".6"/>
            </svg>
          </div>
          <div class="tools swatches">
            <button aria-label="图层"><svg><use href="#layers"/></svg></button><button class="off" aria-label="确定"><svg><use href="#check"/></svg></button><button class="off" aria-label="取消"><svg><use href="#cross"/></svg></button><hr>
            <button class="c1" aria-label="颜色一"></button><button class="c2" aria-label="颜色二"></button><button class="c3" aria-label="颜色三"></button><button class="c4" aria-label="颜色四"></button><button class="c5" aria-label="颜色五"></button><button class="c6" aria-label="颜色六"></button><button class="c7" aria-label="颜色七"></button>
          </div>
        </div>
        <div class="status">
          <div class="sel zoomsel"><select aria-label="缩放"><option>5.532%</option></select></div>
          <button aria-label="角点"><svg><use href="#corner"/></svg></button><button class="act" aria-label="吸附"><svg><use href="#snap"/></svg></button><button class="act" aria-label="避让"><svg><use href="#ring"/></svg></button><button aria-label="间距"><svg><use href="#rows"/></svg></button>
          <label for="gap">零件间距:</label><input id="gap" value="0">
          <button class="lead" aria-label="页边"><svg><use href="#margin"/></svg></button><label for="margin-in">边距:</label><input id="margin-in" value="5">
          <label class="lead" for="nudge">微调距离:</label><input id="nudge" value="5">
          <button class="lead" aria-label="上移"><svg><use href="#up"/></svg></button><button aria-label="下移"><svg><use href="#down"/></svg></button><button aria-label="左移"><svg><use href="#left"/></svg></button><button aria-label="右移"><svg><use href="#right"/></svg></button>
          <label for="rot">旋转角度:</label><div class="sel rotsel"><select id="rot"><option>1</option></select></div>
          <button class="lead" aria-label="逆时针"><svg><use href="#ccw"/></svg></button><button aria-label="顺时针"><svg><use href="#cw"/></svg></button><button aria-label="左转"><svg><use href="#tl"/></svg></button><button aria-label="右转"><svg><use href="#tr"/></svg></button><button aria-label="镜像"><svg><use href="#mirror"/></svg></button>
          <output>746.06, 2453.37</output>
        </div>
      </div>

      <aside class="nests">
        <h2 class="head">排版(64种, 共177张)</h2>
        <div class="bar"><button aria-label="添加"><svg><use href="#plus"/></svg></button><i class="caret"></i><button aria-label="选择"><svg><use href="#cursor"/></svg></button><i class="caret"></i><button class="off" aria-label="删除"><svg><use href="#trash"/></svg></button><span></span><button class="off" aria-label="导出"><svg><use href="#share"/></svg></button><span></span><button aria-label="排序"><svg><use href="#sortu"/></svg></button></div>
        <div class="draft">草图</div>
        <ul class="nestlist">
          <li class="picked"><input type="checkbox" aria-label="排版 1"><svg><use href="#thumb"/></svg><div><b>排版 1</b><span>数量: 3</span><span>板材尺寸: 1500 x 3000</span><span>实际尺寸: 1488.8 x 2988.8</span><span>利用率: 91.8%</span><span>零件数: 47</span></div></li>
          <li><input type="checkbox" aria-label="排版 2"><svg><use href="#thumb"/></svg><div><b>排版 2</b><span>数量: 1</span><span>板材尺寸: 1500 x 3000</span><span>实际尺寸: 1488.8 x 2988.8</span><span>利用率: 91.3%</span><span>零件数: 41</span></div></li>
          <li><input type="checkbox" aria-label="排版 3"><svg><use href="#thumb"/></svg><div><b>排版 3</b><span>数量: 6</span><span>板材尺寸: 1500 x 3000</span><span>实际尺寸: 1488.8 x 2988.8</span><span>利用率: 90.5%</span><span>零件数: 33</span></div></li>
          <li><input type="checkbox" aria-label="排版 4"><svg><use href="#thumb"/></svg><div><b>排版 4</b><span>数量: 2</span><span>板材尺寸: 1500 x 3000</span><span>实际尺寸: 1488.8 x 2988.8</span><span>利用率: 90.8%</span><span>零件数: 38</span></div></li>
        </ul>
      </aside>
    </div>
    <div class="log">
      <div class="tab">日志</div>
      <ul>
        <li><span>(2022/3/4 18:30:54):</span>添加零件</li>
        <li><span>(2022/3/4 18:30:58):</span>手动排版了1个对象</li>
        <li><span>(2022/3/4 18:31:04):</span>零件数量不足</li>
        <li><span>(2022/3/4 18:31:04):</span>阵列了6个对象</li>
        <li><span>(2022/3/4 18:31:39):</span>添加零件</li>
        <li><span>(2022/3/4 18:31:59):</span>添加板材</li>
      </ul>
    </div>
  </div>
</main>

<footer class="viewer">
  <button aria-label="上一张"><svg viewBox="0 0 18 18"><path d="M17 9.500H1.500M8 3L1.500 9.500 8 16"/></svg></button>
  <button aria-label="下一张"><svg viewBox="0 0 18 18"><path d="M1 9.500h15.500M10 3l6.500 6.500L10 16"/></svg></button>
  <i class="sep"></i>
  <button aria-label="缩小"><svg viewBox="0 0 18 18"><circle cx="7.500" cy="7.500" r="6.500"/><path d="M12.500 12.500l5 5M4.500 7.500h6"/></svg></button>
  <button aria-label="放大"><svg viewBox="0 0 18 18"><circle cx="7.500" cy="7.500" r="6.500"/><path d="M12.500 12.500l5 5M4.500 7.500h6M7.500 4.500v6"/></svg></button>
  <button aria-label="适合窗口"><svg viewBox="0 0 18 18"><rect x=".7" y="2" width="16.500" height="14" rx="2"/><rect x="5" y="6" width="8" height="6" rx="1"/></svg></button>
  <button class="off" aria-label="旋转"><svg viewBox="0 0 18 18"><rect x="1" y="6" width="11" height="11" rx="1.500"/><path d="M16.500 7V4.500a2 2 0 0 0-2-2H9M12 0L9 2.500 12 5"/></svg></button>
  <button aria-label="保存"><svg viewBox="0 0 18 18"><path d="M9 1v13M3.500 9L9 14.500 14.500 9M3 16.500h12"/></svg></button>
</footer>
</body>
</html>
```
FILE: styles.css
```css
* { box-sizing: border-box; }
body {
  margin: 0;
  height: 100vh;
  display: flex;
  flex-direction: column;
  overflow: hidden;
  background: #fff;
  color: #26302e;
  font: 7px/9px "Noto Sans", "Noto Sans CJK SC", sans-serif;
}
h1, h2, ul, ol { margin: 0; padding: 0; font-weight: normal; font-size: inherit; list-style: none; }
button, input, select { font: inherit; color: inherit; margin: 0; padding: 0; border: 0; background: none; }
button { display: flex; align-items: center; justify-content: center; }
svg { display: block; flex: none; fill: none; stroke: #3c4447; stroke-width: 1; overflow: hidden; }
svg text { stroke: none; }
pattern { stroke: none; }
.defs { position: absolute; width: 0; height: 0; }
.b { fill: var(--accent, #7ab0e6); stroke: var(--accent-line, #36597d); }
.k { fill: #26303a; }
.l { stroke: var(--accent-line, #3b88cc); }
.off { color: #b9bdbe; --accent: #d4dcf0; --accent-line: #bfbfc8; }
.off svg { stroke: #bfbfc2; }
.caret { width: 0; height: 0; border: 2px solid transparent; border-top: 3px solid #222; border-bottom: 0; }
.off .caret { border-top-color: #b5b5b5; }
.caret.flip { transform: rotate(180deg); }
input[type=checkbox] { appearance: none; flex: none; width: 9px; height: 9px; border: 1px solid #4c5556; background: #f0ffff; }

.titlebar { display: flex; justify-content: space-between; height: 32px; padding: 0 12px 0 16px; align-items: center; }
.titlebar h1 { font-size: 11px; line-height: 16px; color: #000; }
.winbtns { display: flex; gap: 25px; align-self: flex-start; padding-top: 7px; }
.i11 { width: 11px; height: 11px; stroke: #777; }

.ribbon {
  display: grid;
  grid-template-columns: 54fr 69fr 86fr 60fr 166fr 182fr 163fr 89fr 60fr 21fr;
  height: 60px;
  background: #ebffff;
  flex: none;
}
.ribbon section { display: flex; flex-direction: column; border-right: 1px solid #ead9da; min-width: 0; }
.ribbon h2 { height: 14px; line-height: 14px; border-top: 1px solid #f2d9da; text-align: center; }
.ribbon .body { flex: 1; display: flex; justify-content: space-around; min-width: 0; white-space: nowrap; }
.ribbon section:first-child .body { justify-content: flex-end; }
.big { flex: none; flex-direction: column; justify-content: flex-start; width: 30px; padding-top: 4px; }
.big svg { width: 16px; height: 16px; margin-bottom: 6px; }
.big .caret { margin-top: 1px; }
.stack { display: flex; flex-direction: column; align-items: flex-start; padding-top: 2px; }
.stack button { height: 13px; gap: 3px; }
.stack svg { width: 8px; height: 8px; stroke-width: 2; }
.playback { display: flex; flex-direction: column; width: 90px; }
.steps { display: flex; justify-content: space-between; padding: 6px 1px 0; }
.steps svg { width: 11px; height: 11px; }
.playback input { appearance: none; width: 88px; height: 9px; margin-top: 8px; background: linear-gradient(#a9afb2, #a9afb2) center / 100% 1px no-repeat; }
.playback input::-webkit-slider-thumb { appearance: none; width: 3px; height: 7px; background: #000; }
.ticks { height: 2px; margin: 0 2px; background: repeating-linear-gradient(90deg, #9aa 0 1px, transparent 1px 8px); }

main { flex: 1; display: flex; min-height: 0; background: #ededed; }
.parts { width: 175px; flex: none; display: flex; flex-direction: column; border-right: 1px solid #cfc9cf; background: #f8fbf9; padding-top: 2px; }
.head { height: 13px; line-height: 13px; font-size: 8px; font-weight: bold; background: #dbdbdb; color: #15191a; white-space: nowrap; flex: none; }
.bar { height: 21px; flex: none; display: flex; align-items: center; justify-content: space-between; padding: 0 3px; background: #efefef; border-bottom: 1px solid #d5d5d9; }
.bar svg { width: 13px; height: 13px; }
.listwrap { flex: 1; display: flex; min-height: 0; padding-top: 1px; }
.partlist { flex: 1; overflow: hidden; padding-top: 1px; }
.partlist li { display: flex; align-items: center; height: 37px; }
.partlist label { width: 13px; text-align: center; margin-right: 3px; }
.partlist svg { width: 40px; height: 28px; margin: 0 4px; }
.partlist div { line-height: 11px; white-space: nowrap; padding-left: 1px; }
.partlist b, .partlist span, .partlist em { display: block; }
.partlist b { color: #111; }
.partlist em { width: 17px; font-style: normal; background: #b3d3b0; color: #223d2a; }
.partlist .picked { background: #c3daf5; }
.scroll { width: 10px; flex: none; display: flex; flex-direction: column; background: #ececec; }
.scroll button { height: 10px; flex: none; border: 1px solid #ccc; background: #f8f8f8; }
.scroll .grip { height: 71px; border: 1px solid #c8c8c8; background: #f4f4f4; margin-bottom: auto; }
.filters { height: 16px; flex: none; display: flex; align-items: center; justify-content: space-between; padding: 0 6px 0 1px; }
.filters label { display: flex; gap: 2px; align-items: center; }

.work { flex: 1; display: flex; flex-direction: column; min-width: 0; }
.upper { flex: 1; display: flex; min-height: 0; }
.center { flex: 1; display: flex; flex-direction: column; min-width: 0; }
.stage { flex: 1; display: flex; min-height: 0; }
.tools { width: 23px; flex: none; display: flex; flex-direction: column; align-items: center; padding-top: 6px; }
.tools button { width: 17px; height: 17px; }
.tools svg { width: 12px; height: 12px; }
.tools .on { border: 1px solid #656d70; background: #e1e8e7; }
.tools .zi svg { fill: #8dbbea; }
.tools hr { width: 15px; height: 1px; margin: 2px 0; border: 0; background: #cfcfd2; }
.swatches svg { width: 10px; height: 10px; }
.swatches button[class^=c]::before { content: ""; width: 11px; height: 11px; background: var(--c); }
.c1 { --c: #f1d79f; } .c2 { --c: #6ba1e8; } .c3 { --c: #a6cfea; } .c4 { --c: #f7d9b9; }
.c5 { --c: #bedbf9; } .c6 { --c: #c4b4cf; } .c7 { --c: #b2ada1; }

.canvas { flex: 1; min-width: 0; display: grid; grid-template: 11px minmax(0, 1fr) / 11px minmax(0, 1fr); background: #000; }
.canvas svg { width: 100%; height: 100%; }
.cross { background: #c9cbca; border-right: 1px solid #9aa39f; border-bottom: 1px solid #9aa39f; }
.num { font-size: 7px; fill: #6f7b72; stroke: none; }
.end { text-anchor: end; }
.result { font-size: 9px; fill: #1cb42a; }

.status { height: 19px; flex: none; display: flex; align-items: center; padding: 0 18px 0 34px; white-space: nowrap; }
.status button { width: 12px; height: 12px; margin-right: 2px; background: #d9e9f5; }
.status svg { width: 10px; height: 10px; stroke: #20282c; stroke-width: 2; }
.status .act { background: #5b9be0; }
.status .act svg { stroke: #fff; stroke-width: 1; }
.status input, .status select { height: 12px; width: 23px; border: 1px solid #cbd3d6; background: #edffff; padding: 0 3px; }
.status label { margin-right: 2px; }
.status .lead { margin-left: 4px; }
.sel { position: relative; }
.status select { appearance: none; width: 100%; line-height: 10px; }
.zoomsel { width: 52px; margin-right: 4px; }
.rotsel { width: 29px; }
.status .sel::after { content: ""; position: absolute; right: 3px; top: 5px; border: 2px solid transparent; border-top: 3px solid #222; border-bottom: 0; }
output { margin-left: auto; }

.nests { width: 174px; flex: none; display: flex; flex-direction: column; border-left: 1px solid #cfc9cf; background: #f8fbf9; padding-top: 1px; overflow: hidden; }
.nests .head { padding-left: 5px; }
.nests .bar { padding: 0 8px 0 7px; }
.nests .draft { height: 61px; flex: none; margin: 1px 0 4px 1px; border: 1px solid #cccccf; border-right: 0; display: flex; align-items: center; padding-left: 73px; font-weight: bold; background: #f3fcf6; }
.nestlist { flex: 1; min-height: 0; overflow: hidden; padding-left: 1px; border-right: 2px solid #e4e4e6; }
.nestlist li { height: 78px; display: flex; align-items: center; padding: 0 0 2px 2px; margin-right: 1px; }
.nestlist .picked { background: #abceef; }
.nestlist svg { width: 29px; height: 57px; margin: 0 17px; }
.nestlist b, .nestlist span { display: block; white-space: nowrap; }
.nestlist b { line-height: 14px; color: #111; }

.log { height: 61px; flex: none; display: flex; background: #faf8f8; border-top: 1px solid #cfcfd4; }
.tab { width: 21px; padding-top: 3px; text-align: center; border-right: 1px solid #cfcfd4; background: #f8f8f8; }
.log ul { padding: 2px 0 0 2px; }
.log li { display: flex; gap: 4px; }

.viewer { height: 48px; flex: none; display: flex; align-items: center; justify-content: center; gap: 22px; background: #fff; }
.viewer svg { width: 18px; height: 18px; stroke: #111; stroke-width: 1.200; }
.viewer .sep { width: 1px; height: 16px; background: #e5e5e5; margin: 0 -5px; }
.viewer .off svg { stroke: #999; }
```
